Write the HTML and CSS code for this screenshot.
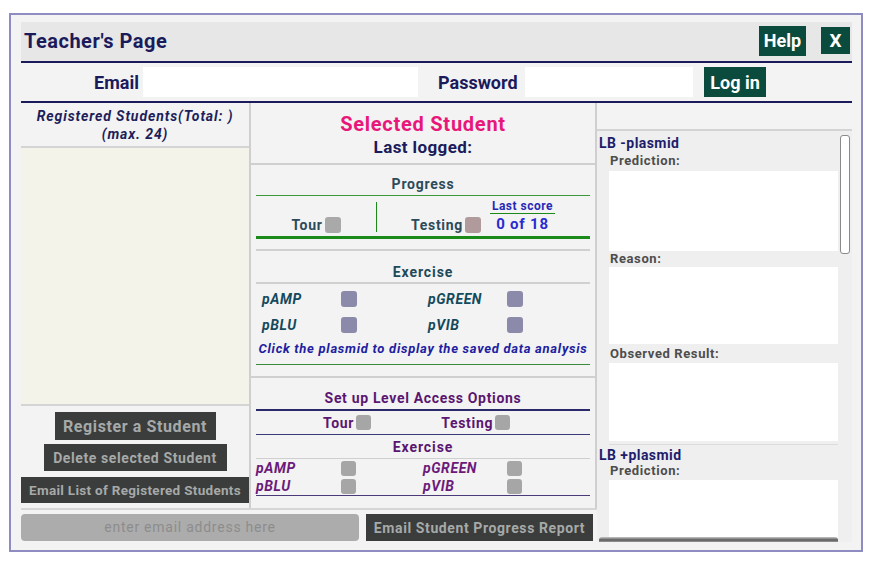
FILE: index.html
```html
<!DOCTYPE html>
<html>
<head>
<meta charset="utf-8">
<title>Teacher's Page</title>
<link rel="stylesheet" href="styles.css">
</head>
<body>
<div class="frame">
  <div class="titlebar">
    <h1 class="title">Teacher's Page</h1>
    <div class="title-actions">
      <button class="btn-green help">Help</button>
      <button class="btn-green close">X</button>
    </div>
  </div>
  <div class="login">
    <span class="login-label email-label">Email</span>
    <div class="field email-field"></div>
    <span class="login-label pw-label">Password</span>
    <div class="field pw-field"></div>
    <button class="btn-green login-btn">Log in</button>
  </div>
  <div class="main">
    <div class="left-area">
      <div class="cols">
        <div class="students">
          <div class="students-head">Registered Students(Total: )<br>(max. 24)</div>
          <div class="students-list"></div>
          <div class="students-actions">
            <button class="btn-dark btn-register">Register a Student</button>
            <button class="btn-dark btn-delete">Delete selected Student</button>
            <button class="btn-dark btn-emaillist">Email List of Registered Students</button>
          </div>
        </div>
        <div class="detail">
          <div class="detail-head">
            <div class="sel-title">Selected Student</div>
            <div class="last-logged">Last logged:</div>
          </div>
          <div class="detail-upper">
            <div class="progress-head">Progress</div>
            <div class="progress-row">
              <div class="prog-tour"><span class="lbl">Tour</span><span class="box box-gray"></span></div>
              <div class="prog-divider"></div>
              <div class="prog-testing"><span class="lbl">Testing</span><span class="box box-pink"></span></div>
              <div class="prog-score">
                <div class="score-title">Last score</div>
                <div class="score-value">0 of 18</div>
              </div>
            </div>
            <div class="ex-head">Exercise</div>
            <div class="ex-grid">
              <span class="ex-lbl">pAMP</span><span class="box box-purple"></span>
              <span class="ex-lbl">pGREEN</span><span class="box box-purple"></span>
              <span class="ex-lbl">pBLU</span><span class="box box-purple"></span>
              <span class="ex-lbl">pVIB</span><span class="box box-purple"></span>
            </div>
            <div class="ex-hint">Click the plasmid to display the saved data analysis</div>
          </div>
          <div class="access">
            <div class="access-head">Set up Level Access Options</div>
            <div class="access-row">
              <div class="acc-item"><span class="acc-lbl">Tour</span><span class="box box-sm"></span></div>
              <div class="acc-item acc-testing"><span class="acc-lbl">Testing</span><span class="box box-sm"></span></div>
            </div>
            <div class="access-ex">Exercise</div>
            <div class="acc-grid">
              <span class="acc-p">pAMP</span><span class="box box-sm"></span>
              <span class="acc-p">pGREEN</span><span class="box box-sm"></span>
              <span class="acc-p">pBLU</span><span class="box box-sm"></span>
              <span class="acc-p">pVIB</span><span class="box box-sm"></span>
            </div>
          </div>
        </div>
      </div>
      <div class="report-row">
        <div class="report-input">enter email address here</div>
        <button class="btn-dark btn-report">Email Student Progress Report</button>
      </div>
    </div>
    <div class="results">
      <div class="results-top"></div>
      <div class="results-panel">
        <div class="lb-title">LB -plasmid</div>
        <div class="r-label">Prediction:</div>
        <div class="r-box r-box1"></div>
        <div class="r-label">Reason:</div>
        <div class="r-box r-box2"></div>
        <div class="r-label r-label-obs">Observed Result:</div>
        <div class="r-box r-box3"></div>
        <div class="r-sep"></div>
        <div class="lb-title">LB +plasmid</div>
        <div class="r-label">Prediction:</div>
        <div class="r-box r-box4"></div>
        <div class="scrollbar"></div>
        <div class="scroll-edge"></div>
      </div>
    </div>
  </div>
</div>
</body>
</html>
```
FILE: styles.css
```css
* { box-sizing: border-box; }
body {
  margin: 0;
  background: #ffffff;
  font-family: Roboto, "Liberation Sans", sans-serif;
  letter-spacing: 0.6px;
}
button {
  font-family: Roboto, "Liberation Sans", sans-serif;
  letter-spacing: 0.6px;
  border: none;
  padding: 0;
  cursor: pointer;
}
.frame {
  width: 854px;
  height: 539px;
  margin: 13px 0 0 9px;
  border: 2px solid #8e8cc0;
  background: #f3f3f3;
  padding: 7px 9px 0 10px;
}
.titlebar {
  height: 41px;
  background: #e7e7e7;
  border-bottom: 2px solid #1b1b5b;
  display: flex;
  align-items: center;
}
.title {
  margin: 0 0 2px 3px;
  font-size: 20px;
  font-weight: bold;
  letter-spacing: 0.5px;
  color: #1b1b5b;
}
.title-actions {
  margin-left: auto;
  display: flex;
  align-items: center;
  gap: 15px;
  padding-right: 2px;
  margin-bottom: 2px;
}
.btn-green {
  background: #0b4b3d;
  color: #ffffff;
  font-weight: bold;
  font-size: 18px;
  letter-spacing: 0;
}
.help { width: 47px; height: 30px; }
.close { width: 29px; height: 27px; font-size: 19px; }
.login {
  height: 40px;
  border-bottom: 2px solid #1b1b5b;
  display: flex;
  align-items: center;
}
.login-label {
  font-size: 18px;
  font-weight: bold;
  color: #1b1b5b;
  letter-spacing: 0;
}
.email-label { width: 118px; text-align: right; }
.field { background: #ffffff; height: 30px; }
.email-field { width: 275px; margin-left: 4px; }
.pw-label { width: 87px; margin-left: 20px; }
.pw-field { width: 168px; }
.login-btn { width: 62px; height: 30px; margin-left: 11px; }

.main { display: flex; height: 439px; }
.left-area { width: 576px; }
.cols {
  display: flex;
  height: 407px;
  border-bottom: 2px solid #d6d6d6;
}
.students {
  width: 230px;
  border-right: 2px solid #cfcfcf;
  display: flex;
  flex-direction: column;
}
.students-head {
  height: 45px;
  padding-top: 4px;
  border-bottom: 2px solid #d4d4d4;
  text-align: center;
  font-size: 14px;
  letter-spacing: 0.9px;
  line-height: 18px;
  font-weight: bold;
  font-style: italic;
  color: #1e1e5a;
  white-space: nowrap;
}
.students-list {
  height: 258px;
  background: #f4f3ea;
  border-bottom: 2px solid #d4d4d4;
}
.students-actions {
  display: flex;
  flex-direction: column;
  align-items: center;
  padding-top: 6px;
}
.btn-dark {
  background: #3a3d3c;
  color: #a6a9a8;
  font-weight: bold;
  white-space: nowrap;
}
.btn-register { width: 161px; height: 28px; font-size: 16px; }
.btn-delete { width: 183px; height: 27px; font-size: 14px; margin-top: 4px; }
.btn-emaillist { width: 228px; height: 26px; font-size: 13.5px; margin-top: 6px; letter-spacing: 0.3px; }

.detail {
  width: 346px;
  border-right: 2px solid #cfcfcf;
}
.detail-head {
  height: 62px;
  padding-top: 9px;
  border-bottom: 2px solid #cfcfcf;
  text-align: center;
  font-weight: bold;
}
.sel-title { font-size: 20px; line-height: 24px; color: #e8177a; letter-spacing: 0.75px; }
.last-logged { font-size: 17px; line-height: 22px; color: #1b1b5b; letter-spacing: 0.4px; }
.detail-upper {
  padding: 0 5px 11px;
  border-bottom: 2px solid #d0d0d0;
}
.progress-head {
  padding-top: 9px;
  line-height: 21px;
  text-align: center;
  font-size: 14px;
  font-weight: bold;
  letter-spacing: 0.75px;
  color: #2c4a5a;
  border-bottom: 1px solid #3a9a3a;
}
.progress-row {
  height: 43px;
  border-bottom: 3px solid #1a8a1a;
  display: flex;
  align-items: flex-end;
  padding-bottom: 3px;
}
.prog-tour, .prog-testing {
  display: flex;
  align-items: center;
  font-size: 14px;
  font-weight: bold;
  letter-spacing: 0.7px;
  color: #2c4a5a;
}
.prog-tour { width: 120px; justify-content: center; }
.lbl { margin-right: 2px; }
.prog-divider {
  width: 1px;
  height: 30px;
  background: #1a8a1a;
  align-self: flex-end;
  margin-bottom: 1px;
}
.prog-testing { width: 113px; justify-content: flex-end; padding-right: 9px; }
.prog-score { text-align: center; font-weight: bold; }
.score-title {
  font-size: 12px;
  line-height: 14px;
  letter-spacing: 0.5px;
  color: #2828b8;
  width: 65px;
  border-bottom: 1px solid #1a8a1a;
  margin-bottom: 2px;
}
.score-value { font-size: 15px; line-height: 17px; letter-spacing: 0.8px; color: #2a2ad0; }
.box {
  display: inline-block;
  width: 16px;
  height: 16px;
  border-radius: 3px;
}
.box-gray { background: #a9a9a9; }
.box-pink { background: #b09a9c; }
.box-purple { background: #8b8aab; }
.box-sm { width: 15px; height: 15px; background: #a6a6a6; }
.ex-head {
  margin-top: 10px;
  border-top: 2px solid #d0d0d0;
  border-bottom: 2px solid #d0d0d0;
  padding-top: 11px;
  line-height: 20px;
  text-align: center;
  font-size: 14px;
  font-weight: bold;
  letter-spacing: 0.9px;
  color: #1e4a5a;
}
.ex-grid {
  display: grid;
  grid-template-columns: 79px 87px 79px 1fr;
  grid-auto-rows: 26px;
  align-items: center;
  padding: 2px 0 0 6px;
}
.ex-lbl {
  font-size: 14px;
  font-weight: bold;
  font-style: italic;
  letter-spacing: 0.6px;
  color: #134a5c;
}
.ex-hint {
  margin-top: 3px;
  line-height: 16px;
  padding-bottom: 7px;
  border-bottom: 1px solid #3a8a3a;
  font-size: 13px;
  letter-spacing: 0.72px;
  font-weight: bold;
  font-style: italic;
  color: #2020a0;
  white-space: nowrap;
  text-align: center;
}
.access { padding: 0 5px; }
.access-head {
  padding-top: 9px;
  line-height: 22px;
  border-bottom: 2px solid #2a2a6a;
  text-align: center;
  font-size: 14px;
  font-weight: bold;
  letter-spacing: 0.67px;
  color: #5a1670;
}
.access-row {
  height: 24px;
  border-bottom: 1px solid #3a3a7a;
  display: flex;
  align-items: center;
  padding-left: 67px;
}
.acc-item {
  display: flex;
  align-items: center;
  font-size: 14px;
  font-weight: bold;
  letter-spacing: 0.7px;
  color: #5a1670;
}
.acc-lbl { margin-right: 2px; }
.acc-testing { margin-left: 70px; }
.access-ex {
  padding-top: 2px;
  line-height: 21px;
  border-bottom: 1px solid #cfcfcf;
  text-align: center;
  font-size: 14px;
  font-weight: bold;
  letter-spacing: 0.9px;
  color: #5a1670;
}
.acc-grid {
  display: grid;
  grid-template-columns: 85px 82px 84px 1fr;
  grid-auto-rows: 18px;
  align-items: center;
  border-bottom: 1px solid #4a3a7a;
}
.acc-p {
  font-size: 14px;
  line-height: 18px;
  font-weight: bold;
  font-style: italic;
  color: #6b1a7a;
}

.report-row {
  display: flex;
  gap: 7px;
  margin-top: 4px;
}
.report-input {
  width: 338px;
  height: 27px;
  background: #acacac;
  border-radius: 4px;
  color: #8c8c8c;
  font-size: 14px;
  letter-spacing: 0.75px;
  line-height: 27px;
  text-align: center;
}
.btn-report { width: 227px; height: 27px; font-size: 14px; }

.results { width: 255px; }
.results-top {
  height: 28px;
  border-bottom: 2px solid #d4d4d4;
}
.results-panel {
  position: relative;
  height: 411px;
  overflow: hidden;
  background: #efefef;
  padding-left: 2px;
}
.lb-title {
  line-height: 16px;
  font-size: 14px;
  font-weight: bold;
  letter-spacing: 0.45px;
  color: #1d1d6b;
}
.results-panel > .lb-title:first-child { padding-top: 3px; line-height: 19px; }
.r-label {
  line-height: 16px;
  padding-left: 11px;
  font-size: 13px;
  font-weight: bold;
  letter-spacing: 0.6px;
  color: #4d4d4d;
}
.r-label-obs { line-height: 19px; }
.r-box {
  width: 229px;
  margin-left: 10px;
  background: #ffffff;
}
.r-box1 { height: 80px; margin-top: 2px; }
.r-box2 { height: 77px; }
.r-box3 { height: 78px; }
.r-box4 { height: 80px; margin-top: 1px; }
.r-sep {
  height: 1px;
  margin: 3px 14px 2px 10px;
  background: #dcdcdc;
}
.scrollbar {
  position: absolute;
  top: 4px;
  right: 2px;
  width: 10px;
  height: 119px;
  border: 1px solid #8a8a8a;
  border-radius: 3px;
  background: #ffffff;
}
.scroll-edge {
  position: absolute;
  left: 2px;
  bottom: 0;
  width: 239px;
  height: 5px;
  border-radius: 3px 3px 0 0;
  background: linear-gradient(#c8c8c8, #5a5a5a 60%, #9a9a9a);
}
```
